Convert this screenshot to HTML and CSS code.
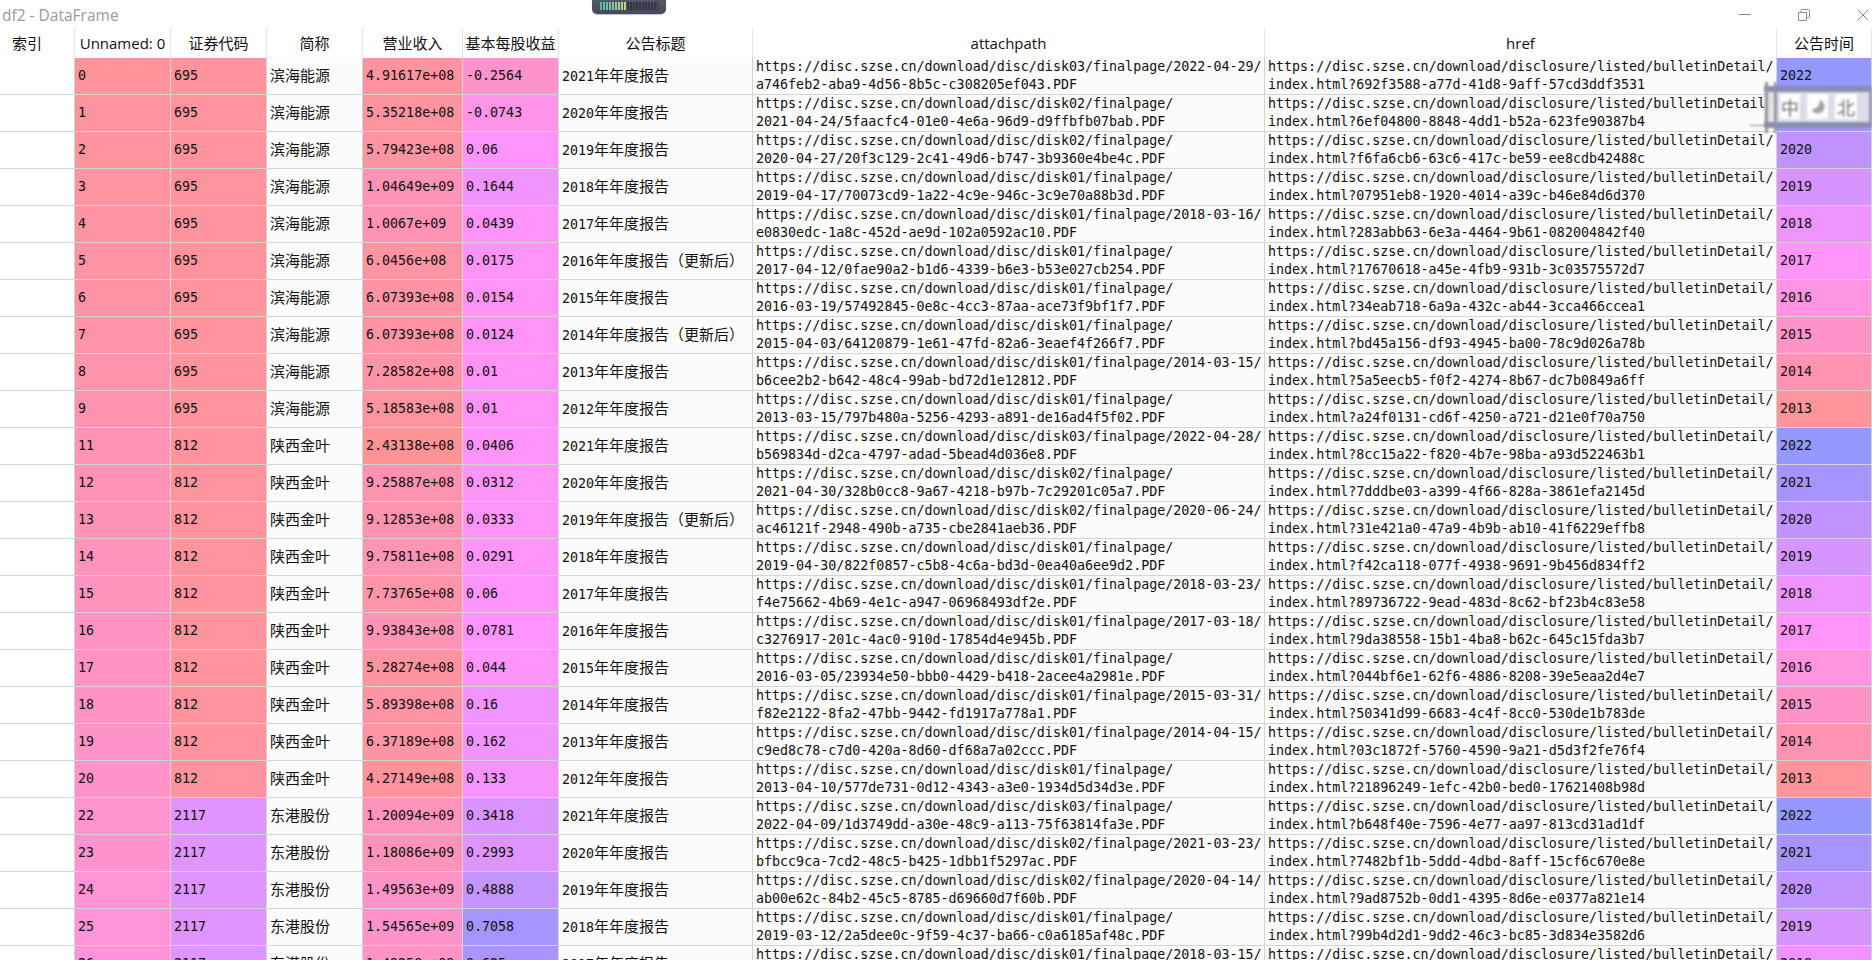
FILE: index.html
```html
<!DOCTYPE html>
<html lang="zh-CN">
<head>
<meta charset="utf-8">
<title>df2 - DataFrame</title>
<link rel="stylesheet" href="styles.css">
</head>
<body>
<div class="window">
  <header class="titlebar">
    <span class="title">df2 - DataFrame</span>
    <div class="controls">
      <svg class="ctl" viewBox="0 0 12 12"><path d="M0 5.5H12"/></svg>
      <svg class="ctl" viewBox="0 0 12 12"><path d="M0.5 3.5H8.5V11.5H0.5ZM3 3.5V1.5Q3 0.5 4 0.5H10.5Q11.5 0.5 11.5 1.5V8Q11.5 9 10.5 9H8.5"/></svg>
      <svg class="ctl" viewBox="0 0 12 12"><path d="M0.5 0.5L11.5 11.5M11.5 0.5L0.5 11.5"/></svg>
    </div>
  </header>
  <table class="grid">
    <colgroup>
      <col class="w-index"><col class="w-std"><col class="w-std"><col class="w-std"><col class="w-rev"><col class="w-std"><col class="w-title"><col class="w-url"><col class="w-url"><col class="w-year">
    </colgroup>
    <thead>
      <tr><th class="idx-head">索引</th><th>Unnamed: 0</th><th>证券代码</th><th>简称</th><th>营业收入</th><th>基本每股收益</th><th>公告标题</th><th>attachpath</th><th>href</th><th>公告时间</th></tr>
    </thead>
    <tbody>
      <tr><td class="idx"></td><td style="background:#ff949a">0</td><td class="c695">695</td><td class="name">滨海能源</td><td style="background:#ff94a0">4.91617e+08</td><td style="background:#ff94cc">-0.2564</td><td>2021<span class="cn">年年度报告</span></td><td>https://disc.szse.cn/download/disc/disk03/finalpage/2022-04-29/<br>a746feb2-aba9-4d56-8b5c-c308205ef043.PDF</td><td>https://disc.szse.cn/download/disclosure/listed/bulletinDetail/<br>index.html?692f3588-a77d-41d8-9aff-57cd3ddf3531</td><td class="y2022">2022</td></tr>
      <tr><td class="idx"></td><td style="background:#ff949c">1</td><td class="c695">695</td><td class="name">滨海能源</td><td style="background:#ff94a1">5.35218e+08</td><td style="background:#ff94e8">-0.0743</td><td>2020<span class="cn">年年度报告</span></td><td>https://disc.szse.cn/download/disc/disk02/finalpage/<br>2021-04-24/5faacfc4-01e0-4e6a-96d9-d9ffbfb07bab.PDF</td><td>https://disc.szse.cn/download/disclosure/listed/bulletinDetail/<br>index.html?6ef04800-8848-4dd1-b52a-623fe90387b4</td><td class="y2021">2021</td></tr>
      <tr><td class="idx"></td><td style="background:#ff949f">2</td><td class="c695">695</td><td class="name">滨海能源</td><td style="background:#ff94a3">5.79423e+08</td><td style="background:#ff94fd">0.06</td><td>2019<span class="cn">年年度报告</span></td><td>https://disc.szse.cn/download/disc/disk02/finalpage/<br>2020-04-27/20f3c129-2c41-49d6-b747-3b9360e4be4c.PDF</td><td>https://disc.szse.cn/download/disclosure/listed/bulletinDetail/<br>index.html?f6fa6cb6-63c6-417c-be59-ee8cdb42488c</td><td class="y2020">2020</td></tr>
      <tr><td class="idx"></td><td style="background:#ff94a1">3</td><td class="c695">695</td><td class="name">滨海能源</td><td style="background:#ff94b6">1.04649e+09</td><td style="background:#f294ff">0.1644</td><td>2018<span class="cn">年年度报告</span></td><td>https://disc.szse.cn/download/disc/disk01/finalpage/<br>2019-04-17/70073cd9-1a22-4c9e-946c-3c9e70a88b3d.PDF</td><td>https://disc.szse.cn/download/disclosure/listed/bulletinDetail/<br>index.html?07951eb8-1920-4014-a39c-b46e84d6d370</td><td class="y2019">2019</td></tr>
      <tr><td class="idx"></td><td style="background:#ff94a4">4</td><td class="c695">695</td><td class="name">滨海能源</td><td style="background:#ff94b4">1.0067e+09</td><td style="background:#ff94fb">0.0439</td><td>2017<span class="cn">年年度报告</span></td><td>https://disc.szse.cn/download/disc/disk01/finalpage/2018-03-16/<br>e0830edc-1a8c-452d-ae9d-102a0592ac10.PDF</td><td>https://disc.szse.cn/download/disclosure/listed/bulletinDetail/<br>index.html?283abb63-6e3a-4464-9b61-082004842f40</td><td class="y2018">2018</td></tr>
      <tr><td class="idx"></td><td style="background:#ff94a6">5</td><td class="c695">695</td><td class="name">滨海能源</td><td style="background:#ff94a4">6.0456e+08</td><td style="background:#ff94f7">0.0175</td><td>2016<span class="cn">年年度报告（更新后）</span></td><td>https://disc.szse.cn/download/disc/disk01/finalpage/<br>2017-04-12/0fae90a2-b1d6-4339-b6e3-b53e027cb254.PDF</td><td>https://disc.szse.cn/download/disclosure/listed/bulletinDetail/<br>index.html?17670618-a45e-4fb9-931b-3c03575572d7</td><td class="y2017">2017</td></tr>
      <tr><td class="idx"></td><td style="background:#ff94a8">6</td><td class="c695">695</td><td class="name">滨海能源</td><td style="background:#ff94a4">6.07393e+08</td><td style="background:#ff94f6">0.0154</td><td>2015<span class="cn">年年度报告</span></td><td>https://disc.szse.cn/download/disc/disk01/finalpage/<br>2016-03-19/57492845-0e8c-4cc3-87aa-ace73f9bf1f7.PDF</td><td>https://disc.szse.cn/download/disclosure/listed/bulletinDetail/<br>index.html?34eab718-6a9a-432c-ab44-3cca466ccea1</td><td class="y2016">2016</td></tr>
      <tr><td class="idx"></td><td style="background:#ff94ab">7</td><td class="c695">695</td><td class="name">滨海能源</td><td style="background:#ff94a4">6.07393e+08</td><td style="background:#ff94f6">0.0124</td><td>2014<span class="cn">年年度报告（更新后）</span></td><td>https://disc.szse.cn/download/disc/disk01/finalpage/<br>2015-04-03/64120879-1e61-47fd-82a6-3eaef4f266f7.PDF</td><td>https://disc.szse.cn/download/disclosure/listed/bulletinDetail/<br>index.html?bd45a156-df93-4945-ba00-78c9d026a78b</td><td class="y2015">2015</td></tr>
      <tr><td class="idx"></td><td style="background:#ff94ad">8</td><td class="c695">695</td><td class="name">滨海能源</td><td style="background:#ff94a9">7.28582e+08</td><td style="background:#ff94f6">0.01</td><td>2013<span class="cn">年年度报告</span></td><td>https://disc.szse.cn/download/disc/disk01/finalpage/2014-03-15/<br>b6cee2b2-b642-48c4-99ab-bd72d1e12812.PDF</td><td>https://disc.szse.cn/download/disclosure/listed/bulletinDetail/<br>index.html?5a5eecb5-f0f2-4274-8b67-dc7b0849a6ff</td><td class="y2014">2014</td></tr>
      <tr><td class="idx"></td><td style="background:#ff94b0">9</td><td class="c695">695</td><td class="name">滨海能源</td><td style="background:#ff94a1">5.18583e+08</td><td style="background:#ff94f6">0.01</td><td>2012<span class="cn">年年度报告</span></td><td>https://disc.szse.cn/download/disc/disk01/finalpage/<br>2013-03-15/797b480a-5256-4293-a891-de16ad4f5f02.PDF</td><td>https://disc.szse.cn/download/disclosure/listed/bulletinDetail/<br>index.html?a24f0131-cd6f-4250-a721-d21e0f70a750</td><td class="y2013">2013</td></tr>
      <tr><td class="idx"></td><td style="background:#ff94b4">11</td><td class="c695">812</td><td class="name">陕西金叶</td><td style="background:#ff9496">2.43138e+08</td><td style="background:#ff94fa">0.0406</td><td>2021<span class="cn">年年度报告</span></td><td>https://disc.szse.cn/download/disc/disk03/finalpage/2022-04-28/<br>b569834d-d2ca-4797-adad-5bead4d036e8.PDF</td><td>https://disc.szse.cn/download/disclosure/listed/bulletinDetail/<br>index.html?8cc15a22-f820-4b7e-98ba-a93d522463b1</td><td class="y2022">2022</td></tr>
      <tr><td class="idx"></td><td style="background:#ff94b7">12</td><td class="c695">812</td><td class="name">陕西金叶</td><td style="background:#ff94b1">9.25887e+08</td><td style="background:#ff94f9">0.0312</td><td>2020<span class="cn">年年度报告</span></td><td>https://disc.szse.cn/download/disc/disk02/finalpage/<br>2021-04-30/328b0cc8-9a67-4218-b97b-7c29201c05a7.PDF</td><td>https://disc.szse.cn/download/disclosure/listed/bulletinDetail/<br>index.html?7dddbe03-a399-4f66-828a-3861efa2145d</td><td class="y2021">2021</td></tr>
      <tr><td class="idx"></td><td style="background:#ff94b9">13</td><td class="c695">812</td><td class="name">陕西金叶</td><td style="background:#ff94b1">9.12853e+08</td><td style="background:#ff94f9">0.0333</td><td>2019<span class="cn">年年度报告（更新后）</span></td><td>https://disc.szse.cn/download/disc/disk02/finalpage/2020-06-24/<br>ac46121f-2948-490b-a735-cbe2841aeb36.PDF</td><td>https://disc.szse.cn/download/disclosure/listed/bulletinDetail/<br>index.html?31e421a0-47a9-4b9b-ab10-41f6229effb8</td><td class="y2020">2020</td></tr>
      <tr><td class="idx"></td><td style="background:#ff94bc">14</td><td class="c695">812</td><td class="name">陕西金叶</td><td style="background:#ff94b3">9.75811e+08</td><td style="background:#ff94f9">0.0291</td><td>2018<span class="cn">年年度报告</span></td><td>https://disc.szse.cn/download/disc/disk01/finalpage/<br>2019-04-30/822f0857-c5b8-4c6a-bd3d-0ea40a6ee9d2.PDF</td><td>https://disc.szse.cn/download/disclosure/listed/bulletinDetail/<br>index.html?f42ca118-077f-4938-9691-9b456d834ff2</td><td class="y2019">2019</td></tr>
      <tr><td class="idx"></td><td style="background:#ff94be">15</td><td class="c695">812</td><td class="name">陕西金叶</td><td style="background:#ff94ab">7.73765e+08</td><td style="background:#ff94fd">0.06</td><td>2017<span class="cn">年年度报告</span></td><td>https://disc.szse.cn/download/disc/disk01/finalpage/2018-03-23/<br>f4e75662-4b69-4e1c-a947-06968493df2e.PDF</td><td>https://disc.szse.cn/download/disclosure/listed/bulletinDetail/<br>index.html?89736722-9ead-483d-8c62-bf23b4c83e58</td><td class="y2018">2018</td></tr>
      <tr><td class="idx"></td><td style="background:#ff94c0">16</td><td class="c695">812</td><td class="name">陕西金叶</td><td style="background:#ff94b4">9.93843e+08</td><td style="background:#fe94ff">0.0781</td><td>2016<span class="cn">年年度报告</span></td><td>https://disc.szse.cn/download/disc/disk01/finalpage/2017-03-18/<br>c3276917-201c-4ac0-910d-17854d4e945b.PDF</td><td>https://disc.szse.cn/download/disclosure/listed/bulletinDetail/<br>index.html?9da38558-15b1-4ba8-b62c-645c15fda3b7</td><td class="y2017">2017</td></tr>
      <tr><td class="idx"></td><td style="background:#ff94c3">17</td><td class="c695">812</td><td class="name">陕西金叶</td><td style="background:#ff94a1">5.28274e+08</td><td style="background:#ff94fb">0.044</td><td>2015<span class="cn">年年度报告</span></td><td>https://disc.szse.cn/download/disc/disk01/finalpage/<br>2016-03-05/23934e50-bbb0-4429-b418-2acee4a2981e.PDF</td><td>https://disc.szse.cn/download/disclosure/listed/bulletinDetail/<br>index.html?044bf6e1-62f6-4886-8208-39e5eaa2d4e7</td><td class="y2016">2016</td></tr>
      <tr><td class="idx"></td><td style="background:#ff94c5">18</td><td class="c695">812</td><td class="name">陕西金叶</td><td style="background:#ff94a4">5.89398e+08</td><td style="background:#f294ff">0.16</td><td>2014<span class="cn">年年度报告</span></td><td>https://disc.szse.cn/download/disc/disk01/finalpage/2015-03-31/<br>f82e2122-8fa2-47bb-9442-fd1917a778a1.PDF</td><td>https://disc.szse.cn/download/disclosure/listed/bulletinDetail/<br>index.html?50341d99-6683-4c4f-8cc0-530de1b783de</td><td class="y2015">2015</td></tr>
      <tr><td class="idx"></td><td style="background:#ff94c8">19</td><td class="c695">812</td><td class="name">陕西金叶</td><td style="background:#ff94a5">6.37189e+08</td><td style="background:#f294ff">0.162</td><td>2013<span class="cn">年年度报告</span></td><td>https://disc.szse.cn/download/disc/disk01/finalpage/2014-04-15/<br>c9ed8c78-c7d0-420a-8d60-df68a7a02ccc.PDF</td><td>https://disc.szse.cn/download/disclosure/listed/bulletinDetail/<br>index.html?03c1872f-5760-4590-9a21-d5d3f2fe76f4</td><td class="y2014">2014</td></tr>
      <tr><td class="idx"></td><td style="background:#ff94ca">20</td><td class="c695">812</td><td class="name">陕西金叶</td><td style="background:#ff949d">4.27149e+08</td><td style="background:#f694ff">0.133</td><td>2012<span class="cn">年年度报告</span></td><td>https://disc.szse.cn/download/disc/disk01/finalpage/<br>2013-04-10/577de731-0d12-4343-a3e0-1934d5d34d3e.PDF</td><td>https://disc.szse.cn/download/disclosure/listed/bulletinDetail/<br>index.html?21896249-1efc-42b0-bed0-17621408b98d</td><td class="y2013">2013</td></tr>
      <tr><td class="idx"></td><td style="background:#ff94cf">22</td><td class="c2117">2117</td><td class="name">东港股份</td><td style="background:#ff94bc">1.20094e+09</td><td style="background:#d994ff">0.3418</td><td>2021<span class="cn">年年度报告</span></td><td>https://disc.szse.cn/download/disc/disk03/finalpage/<br>2022-04-09/1d3749dd-a30e-48c9-a113-75f63814fa3e.PDF</td><td>https://disc.szse.cn/download/disclosure/listed/bulletinDetail/<br>index.html?b648f40e-7596-4e77-aa97-813cd31ad1df</td><td class="y2022">2022</td></tr>
      <tr><td class="idx"></td><td style="background:#ff94d1">23</td><td class="c2117">2117</td><td class="name">东港股份</td><td style="background:#ff94bb">1.18086e+09</td><td style="background:#df94ff">0.2993</td><td>2020<span class="cn">年年度报告</span></td><td>https://disc.szse.cn/download/disc/disk02/finalpage/2021-03-23/<br>bfbcc9ca-7cd2-48c5-b425-1dbb1f5297ac.PDF</td><td>https://disc.szse.cn/download/disclosure/listed/bulletinDetail/<br>index.html?7482bf1b-5ddd-4dbd-8aff-15cf6c670e8e</td><td class="y2021">2021</td></tr>
      <tr><td class="idx"></td><td style="background:#ff94d4">24</td><td class="c2117">2117</td><td class="name">东港股份</td><td style="background:#ff94c8">1.49563e+09</td><td style="background:#c494ff">0.4888</td><td>2019<span class="cn">年年度报告</span></td><td>https://disc.szse.cn/download/disc/disk02/finalpage/2020-04-14/<br>ab00e62c-84b2-45c5-8785-d69660d7f60b.PDF</td><td>https://disc.szse.cn/download/disclosure/listed/bulletinDetail/<br>index.html?9ad8752b-0dd1-4395-8d6e-e0377a821e14</td><td class="y2020">2020</td></tr>
      <tr><td class="idx"></td><td style="background:#ff94d6">25</td><td class="c2117">2117</td><td class="name">东港股份</td><td style="background:#ff94ca">1.54565e+09</td><td style="background:#a694ff">0.7058</td><td>2018<span class="cn">年年度报告</span></td><td>https://disc.szse.cn/download/disc/disk01/finalpage/<br>2019-03-12/2a5dee0c-9f59-4c37-ba66-c0a6185af48c.PDF</td><td>https://disc.szse.cn/download/disclosure/listed/bulletinDetail/<br>index.html?99b4d2d1-9dd2-46c3-bc85-3d834e3582d6</td><td class="y2019">2019</td></tr>
      <tr><td class="idx"></td><td style="background:#ff94d8">26</td><td class="c2117">2117</td><td class="name">东港股份</td><td style="background:#ff94c8">1.49258e+09</td><td style="background:#aa94ff">0.625</td><td>2017<span class="cn">年年度报告</span></td><td>https://disc.szse.cn/download/disc/disk01/finalpage/2018-03-15/<br>&nbsp;</td><td>https://disc.szse.cn/download/disclosure/listed/bulletinDetail/<br>&nbsp;</td><td class="y2018">2018</td></tr>
    </tbody>
  </table>
</div>
<div class="meter" aria-hidden="true"><div class="meter-bars"></div></div>
<div class="ime">
  <span class="ime-tile">中</span>
  <span class="ime-tile mid"><svg class="moon" viewBox="0 0 20 20"><path d="M12 2C12 8 9 12 3 13C5 18 12 19 16 14C19 10 17 4 12 2Z"/></svg></span>
  <span class="ime-tile wide">北</span>
</div>
</body>
</html>
```
FILE: styles.css
```css
html, body {
  margin: 0;
  padding: 0;
  height: 960px;
  overflow: hidden;
  background: #fff;
}
body {
  width: 1872px;
  position: relative;
  font-family: "DejaVu Sans Mono", "Noto Sans CJK SC", monospace;
  font-size: 13.33px;
  color: #111;
}
.window {
  display: flex;
  flex-direction: column;
  height: 960px;
  overflow: hidden;
}
.titlebar {
  flex: 0 0 29px;
  display: flex;
  align-items: center;
  justify-content: space-between;
  background: #fff;
}
.title {
  margin-left: 2px;
  font-family: "Open Sans", "Noto Sans", sans-serif;
  font-size: 15.5px;
  color: #9a9a9a;
}
.controls {
  display: flex;
  gap: 47px;
  padding-right: 3px;
}
.ctl {
  width: 12px;
  height: 12px;
  fill: none;
  stroke: #8c8c8c;
  stroke-width: 1;
}
.grid {
  flex: none;
  table-layout: fixed;
  width: 1872px;
  border-collapse: separate;
  border-spacing: 0;
}
.w-index { width: 75px; }
.w-std { width: 96px; }
.w-rev { width: 100px; }
.w-title { width: 194px; }
.w-url { width: 512px; }
.w-year { width: 95px; }
th {
  height: 29px;
  box-sizing: border-box;
  padding: 0 0 2px;
  font-family: "Open Sans", "Noto Sans", "Noto Sans CJK SC", sans-serif;
  font-size: 15px;
  font-weight: 400;
  line-height: 20px;
  color: #111;
  background: #fff;
  border-right: 1px solid #e2e2e2;
  white-space: nowrap;
  overflow: hidden;
}
th.idx-head {
  text-align: left;
  padding-left: 12px;
}
td {
  height: 37px;
  box-sizing: border-box;
  padding: 0 3px;
  line-height: 18px;
  background: #fcfcfc;
  border-right: 1px solid #d4d4d4;
  border-bottom: 1px solid #d4d4d4;
  white-space: nowrap;
  overflow: hidden;
}
td.idx { background: #fff; }
.name, .cn {
  font-size: 15px;
  font-family: "Noto Sans CJK SC", sans-serif;
}
td.name { padding-bottom: 2px; }
.c695 { background: #ff949c; }
.c2117 { background: #df94ff; }
.y2022 { background: #9498ff; }
.y2021 { background: #a794ff; }
.y2020 { background: #bf94ff; }
.y2019 { background: #d694ff; }
.y2018 { background: #ee94ff; }
.y2017 { background: #ff94f9; }
.y2016 { background: #ff94e1; }
.y2015 { background: #ff94c9; }
.y2014 { background: #ff94b2; }
.y2013 { background: #ff949a; }

/* taskbar-style speed meter peeking in from the top edge */
.meter {
  position: absolute;
  left: 592px;
  top: -6px;
  width: 74px;
  height: 20px;
  box-sizing: border-box;
  padding: 8px 8px 0;
  border-radius: 5px;
  background: linear-gradient(#5a5e6e, #44485a);
  box-shadow: 0 1px 1px rgba(0, 0, 0, 0.25);
}
.meter-bars {
  height: 8px;
  background:
    repeating-linear-gradient(90deg, transparent 0 2px, #4b4f60 2px 3px),
    linear-gradient(90deg, #45b8ac 0, #7cc89a 20%, #c4da74 44%, #343846 44%, #343846 100%);
}

/* floating input-method bar */
.ime {
  position: absolute;
  left: 1764px;
  top: 86px;
  width: 108px;
  height: 42px;
  box-sizing: border-box;
  padding: 2px 0 3px 16px;
  display: flex;
  gap: 7px;
  background: rgba(226, 226, 230, 0.92);
  border-top: 6px solid #8a8cb0;
  border-bottom: 6px solid #8a8cb0;
  border-right: 3px solid #9698b8;
  filter: blur(0.9px);
}
.ime::before {
  content: "";
  position: absolute;
  left: 1px;
  top: -10px;
  bottom: -11px;
  width: 6px;
  border-left: 3px solid #94949c;
  border-right: 3px solid #94949c;
}
.ime::after {
  content: "";
  position: absolute;
  left: -14px;
  bottom: -4px;
  width: 22px;
  height: 0;
  border-top: 1px solid #84848c;
}
.ime-tile {
  flex: 0 0 20px;
  display: flex;
  align-items: center;
  justify-content: center;
  background: #fdfdfd;
  font-family: "Noto Sans CJK SC", sans-serif;
  font-size: 18px;
  line-height: 1;
  color: #6e6e6e;
}
.ime-tile.mid { flex-basis: 21px; }
.ime-tile.wide { flex-basis: 22px; }
.moon {
  width: 18px;
  height: 18px;
  fill: #a4a4a4;
}
```
